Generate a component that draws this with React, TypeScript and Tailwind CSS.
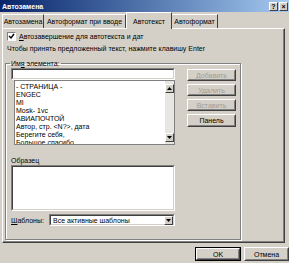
import React from "react";

const items = [
  "- СТРАНИЦА -",
  "ENGEC",
  "MI",
  "Mosk- 1vc",
  "АВИАПОЧТОЙ",
  "Автор, стр. <N?>, дата",
  "Берегите себя,",
  "Большое спасибо,",
];

function Sunken({ className, children }: { className: string; children?: React.ReactNode }) {
  return (
    <div className={`border border-t-[#808080] border-l-[#808080] border-b-white border-r-white ${className}`}>
      <div className="h-full w-full border border-t-[#404040] border-l-[#404040] border-b-[#d4d0c8] border-r-[#d4d0c8] bg-white">
        {children}
      </div>
    </div>
  );
}

function WinButton({ label, disabled, className }: { label: string; disabled?: boolean; className: string }) {
  return (
    <div className={`border border-t-white border-l-white border-b-[#404040] border-r-[#404040] ${className}`}>
      <div
        className={`flex h-full w-full items-center justify-center border border-t-[#d4d0c8] border-l-[#d4d0c8] border-b-[#808080] border-r-[#808080] leading-none ${
          disabled ? "text-[#a09c94]" : "text-black"
        }`}
      >
        {label}
      </div>
    </div>
  );
}

function ScrollArrow({ up }: { up: boolean }) {
  return (
    <div className="h-[9px] w-[9px] border border-t-white border-l-white border-b-[#404040] border-r-[#404040] bg-[#d4d0c8] flex items-center justify-center">
      <svg width="5" height="3" viewBox="0 0 5 3">
        <path d={up ? "M2.5 0 L5 3 L0 3 Z" : "M0 0 L5 0 L2.5 3 Z"} fill="black" />
      </svg>
    </div>
  );
}

export default function App() {
  return (
    <div
      className="relative h-[263px] w-[289px] overflow-hidden bg-[#d4d0c8] text-[7px] text-black"
      style={{ fontFamily: '"Liberation Sans", Arial, sans-serif' }}
    >
      {/* title bar */}
      <div className="flex h-[12px] items-center justify-between bg-gradient-to-r from-[#0a246a] to-[#a6caf0] pl-[2px] pr-[1px]">
        <span className="font-bold text-white leading-none">Автозамена</span>
        <div className="flex gap-[0px]">
          <div className="flex h-[9px] w-[9px] items-center justify-center border border-t-white border-l-white border-b-[#404040] border-r-[#404040] bg-[#d4d0c8] font-bold leading-none">
            ?
          </div>
          <div className="ml-[1px] flex h-[9px] w-[9px] items-center justify-center border border-t-white border-l-white border-b-[#404040] border-r-[#404040] bg-[#d4d0c8] font-bold leading-none">
            ×
          </div>
        </div>
      </div>

      {/* tabs */}
      <div className="flex h-[16px] items-end pl-[2px]">
        <div className="flex h-[14px] w-[42px] items-center justify-center border-l border-t border-white border-r-[#404040] border-r leading-none">
          Автозамена
        </div>
        <div className="flex h-[14px] w-[82px] items-center justify-center border-t border-white border-r border-r-[#404040] leading-none">
          Автоформат при вводе
        </div>
        <div className="relative z-10 -mb-[1px] flex h-[17px] w-[46px] items-center justify-center border-l border-t border-white border-r border-r-[#404040] bg-[#d4d0c8] leading-none">
          Автотекст
        </div>
        <div className="flex h-[14px] w-[46px] items-center justify-center border-t border-white border-r border-r-[#404040] leading-none">
          Автоформат
        </div>
      </div>

      {/* main panel */}
      <div className="ml-[2px] h-[215px] w-[283px] border border-t-white border-l-white border-b-[#404040] border-r-[#404040]">
        <div className="h-full w-full border-b border-r border-[#808080] pt-[3px]">
          <div className="ml-[4px] flex h-[9px] items-center gap-[3px]">
            <div className="flex h-[9px] w-[9px] items-center justify-center border border-t-[#808080] border-l-[#808080] border-b-white border-r-white bg-white">
              <svg width="7" height="7" viewBox="0 0 7 7">
                <path d="M1 3 L3 5 L6 1" stroke="black" strokeWidth="1.4" fill="none" />
              </svg>
            </div>
            <span className="leading-none">
              <span className="underline">А</span>втозавершение для автотекста и дат
            </span>
          </div>
          <div className="ml-[4px] mt-[4px] leading-none">
            Чтобы принять предложенный текст, нажмите клавишу Enter
          </div>

          <fieldset className="ml-[2px] mt-[8px] h-[180px] w-[236px] border border-[#808080] shadow-[1px_1px_0_white,inset_1px_1px_0_white]">
            <legend className="ml-[4px] px-[1px] leading-none">
              Им<span className="underline">я</span> элемента:
            </legend>
            <div className="flex">
              <div className="ml-[5px] flex w-[164px] flex-col">
                <Sunken className="mt-[1px] h-[12px] w-[164px]" />
                <div className="ml-[3px] flex h-[65px] w-[161px] border border-[#808080]">
                  <div className="flex-1 overflow-hidden bg-white pl-[1px] pt-[2px]">
                    {items.map((t) => (
                      <div key={t} className="h-[8px] leading-[8px] whitespace-nowrap">
                        {t}
                      </div>
                    ))}
                  </div>
                  <div className="flex w-[9px] flex-col justify-between bg-[#e8e6e2]">
                    <div className="mt-[3px]">
                      <ScrollArrow up />
                    </div>
                    <div className="mb-[2px]">
                      <ScrollArrow up={false} />
                    </div>
                  </div>
                </div>
                <div className="mt-[12px] leading-none">Образец</div>
                <Sunken className="mt-[1px] h-[46px] w-[164px]" />
                <div className="mt-[3px] flex h-[12px] items-center">
                  <span className="w-[38px] leading-none">
                    <span className="underline">Ш</span>аблоны:
                  </span>
                  <Sunken className="h-[12px] w-[126px]">
                    <div className="flex h-full items-center justify-between">
                      <span className="pl-[2px] leading-none">Все активные шаблоны</span>
                      <ScrollArrow up={false} />
                    </div>
                  </Sunken>
                </div>
              </div>
              <div className="ml-[12px] mt-[2px] flex flex-col gap-[3px]">
                <WinButton label="Добавить" disabled className="h-[12px] w-[49px]" />
                <WinButton label="Удалить" disabled className="h-[12px] w-[49px]" />
                <WinButton label="Вставить" disabled className="h-[12px] w-[49px]" />
                <WinButton label="Панель" className="h-[13px] w-[49px]" />
              </div>
            </div>
          </fieldset>
        </div>
      </div>

      {/* bottom buttons */}
      <div className="mt-[4px] flex justify-end gap-[3px] pr-[0px]">
        <div className="border border-black">
          <WinButton label="OK" className="h-[12px] w-[44px]" />
        </div>
        <WinButton label="Отмена" className="h-[14px] w-[45px]" />
      </div>
    </div>
  );
}
